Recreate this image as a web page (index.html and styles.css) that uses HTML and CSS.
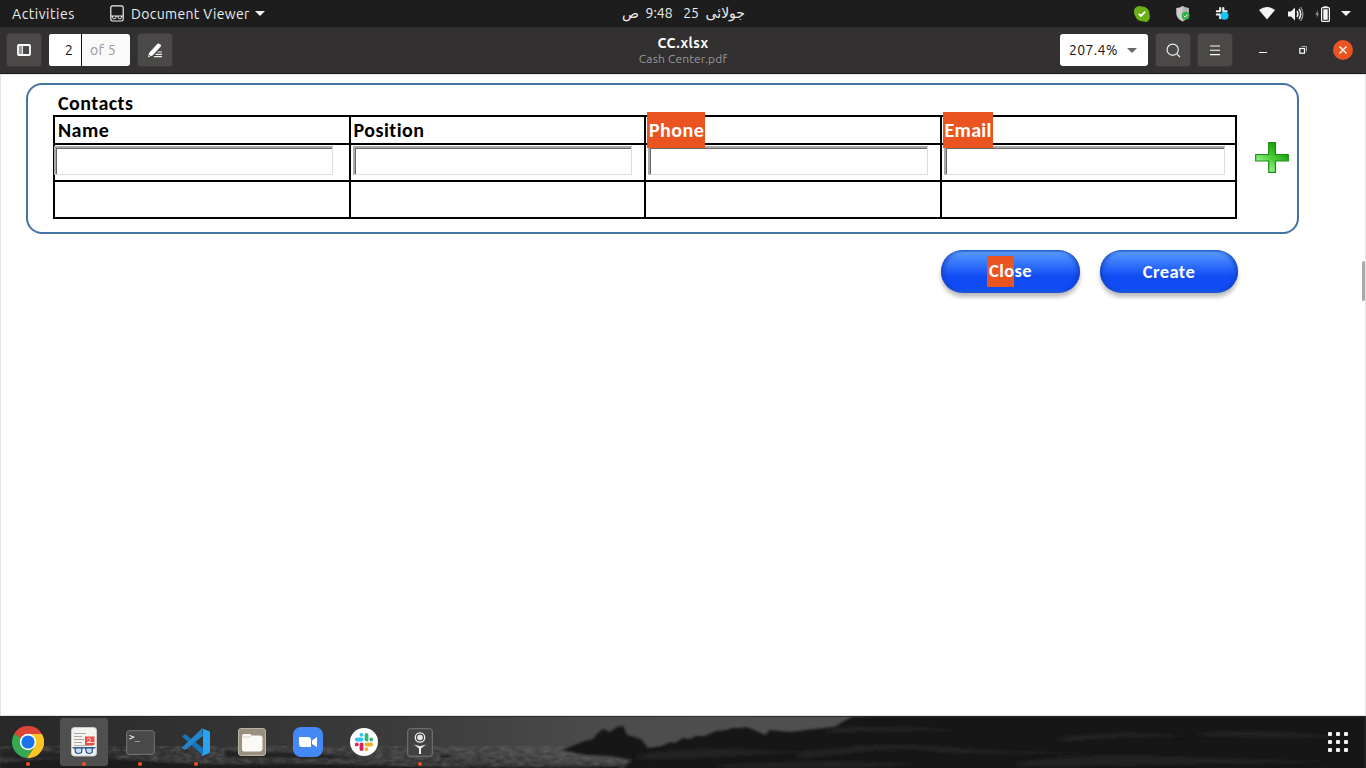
FILE: index.html
```html
<!DOCTYPE html>
<html lang="en">
<head>
<meta charset="utf-8">
<title>Document Viewer</title>
<link rel="stylesheet" href="styles.css">
</head>
<body>
<div class="topbar">
  <span class="activities">Activities</span>
  <div class="app-menu">
    <svg width="14" height="17" viewBox="0 0 14 17" fill="none" stroke="#f2f2f2"><rect x=".8" y=".8" width="12.4" height="15.2" rx="1.8" stroke-width="1.2"/><path d="M1 11H13M2.500 11V12.500Q2.500 13.800 4.200 13.800T6 12.200V11M11.500 11V12.500Q11.500 13.800 9.800 13.800T8 12.200V11" stroke-width="1"/></svg>
    <span class="app-name">Document Viewer</span>
    <span class="caret"></span>
  </div>
  <div class="clock" dir="rtl"><span class="month">جولائی</span><span class="day">25</span><span class="time">9:48</span><span class="ampm">ص</span></div>
  <div class="tray">
    <svg class="t-skype" width="16" height="16" viewBox="0 0 16 16"><path d="M5 0Q7 .3 8 .5A7.500 7.500 0 0 1 15.500 8.500Q16.500 12 14.500 14.500T10 15.500Q3 16 .7 9Q-.7 5 .7 2.500T5 0Z" fill="#6aaf14"/><path d="M4.800 7.800 7 10l4.300-4.300" stroke="#fff" stroke-width="1.900" fill="none"/></svg>
    <svg class="t-shield" width="15" height="16" viewBox="0 0 15 16"><path d="M6.500 0Q9 2 12.700 2V8Q12 13 6.500 15.500Q.9 13 .3 8V2Q4 2 6.500 0Z" fill="#cfcfcf"/><path d="M6.500 0V15.500Q12 13 12.700 8V2Q9 2 6.500 0" fill="#b5b5b5"/><circle cx="9.600" cy="9.700" r="3.900" fill="#2fb344"/><path d="m7.700 9.700 1.500 1.500 2.500-2.700" stroke="#fff" fill="none"/></svg>
    <svg class="t-slack" width="15" height="15" viewBox="0 0 15 15"><g stroke="#f4f4f4" stroke-width="2.100" stroke-linecap="round"><path d="M5.200 2V4.800M8.300 2V5.200M1.800 5.200H4.800M8.600 5.200H11.600M1.800 8.500H4.800M5.200 9.200V12.300"/></g><circle cx="9.500" cy="9.800" r="4" fill="#10c6f4"/></svg>
    <svg class="t-wifi" width="16" height="13" viewBox="0 0 16 13"><path d="M0 3Q8-3 16 3L8 12.500Z" fill="#f5f5f5"/></svg>
    <svg class="t-vol" width="17" height="16" viewBox="0 0 17 16"><path d="M0 5.500H3L7 1.500V14.500L3 10.500H0Z" fill="#f5f5f5"/><path d="M9 5Q11 8 9 11M11 3Q14.500 8 11 13" fill="none" stroke="#f5f5f5" stroke-width="1.500"/><path d="M12.500 1Q17.500 8 12.500 15" fill="none" stroke="#999" stroke-width="1.200"/></svg>
    <svg class="t-bat" width="15" height="16" viewBox="0 0 15 16"><path d="M3 4 .3 8.800H2L1.600 12 4 7.500H2.500Z" fill="#999"/><rect x="6.600" y="1.600" width="7.800" height="13.800" rx="1" fill="none" stroke="#f5f5f5" stroke-width="1.200"/><path d="M8.500.3h4v1.500h-4zM8.300 3.300h4.400v10.400H8.300z" fill="#f5f5f5"/></svg>
    <span class="caret"></span>
  </div>
</div>

<div class="header">
  <button class="hbtn"><svg width="14" height="12" viewBox="0 0 14 12"><rect x="1" y="1" width="12" height="10" rx=".8" fill="none" stroke="#fff" stroke-width="1.800"/><path d="M2 2H4.500V10H2Z" fill="#999"/><path d="M5.300 2V10" stroke="#fff" stroke-width="1.200"/></svg></button>
  <div class="pages"><span class="cur">2</span><span class="total">of 5</span></div>
  <button class="hbtn"><svg width="14" height="15" viewBox="0 0 14 15"><path d="M0 14.300 1 10 9.500.8Q10.500 0 12 1.200T12.800 3.500L4.500 12.500Z" fill="#fff"/><path d="M.9 12 2.600 13.200" stroke="#4a4947" stroke-width=".8"/><path d="M9.500 9H14M7.500 11.300H14M6 13.700H14" stroke="#eee" stroke-width="1.200"/></svg></button>
  <div class="title"><b>CC.xlsx</b><span>Cash Center.pdf</span></div>
  <div class="right">
    <div class="zoom"><span class="zoom-val">207.4%</span><span class="caret dark"></span></div>
    <button class="hbtn"><svg width="15" height="15" viewBox="0 0 15 15" fill="none" stroke="#eee" stroke-width="1.200"><circle cx="6.700" cy="6.700" r="5.600"/><path d="m10.800 10.800 3.200 3.200"/></svg></button>
    <button class="hbtn"><svg width="12" height="11" viewBox="0 0 12 11"><path d="M1 1H11M1 5.300H11M1 9.600H11" stroke="#fff" stroke-width="1.100"/></svg></button>
    <svg class="min" width="8" height="8" viewBox="0 0 8 8"><path d="M0 6.500H8" stroke="#fff"/></svg>
    <svg class="max" width="8" height="8" viewBox="0 0 8 8" fill="none"><path d="M2.500.5H7.500V5.500" stroke="#aaa"/><rect x=".8" y="2.500" width="4.700" height="4.700" stroke="#fff" stroke-width="1.200"/></svg>
    <svg class="close" width="20" height="20" viewBox="0 0 20 20"><circle cx="10" cy="10" r="10" fill="#e95420"/><path d="m6.500 6.500 7 7M13.500 6.500l-7 7" stroke="#fff" stroke-width="1.400"/></svg>
  </div>
</div>

<main class="doc">
  <section class="frame">
    <div class="contacts">
      <h1>Contacts</h1>
      <div class="table">
        <div class="cell head"><span>Name</span></div>
        <div class="cell head"><span>Position</span></div>
        <div class="cell head"><mark class="m-phone">Phone</mark></div>
        <div class="cell head"><mark class="m-email">Email</mark></div>
        <div class="cell"><div class="field f1"></div></div>
        <div class="cell"><div class="field f2"></div></div>
        <div class="cell"><div class="field f3"></div></div>
        <div class="cell"><div class="field f4"></div></div>
        <div class="cell"></div><div class="cell"></div><div class="cell"></div><div class="cell"></div>
      </div>
    </div>
    <svg class="plus" width="34" height="31" viewBox="0 0 34 31"><defs><linearGradient id="pg" x1="0" y1="1" x2=".9" y2="0"><stop offset=".12" stop-color="#b4ffb0"/><stop offset=".5" stop-color="#4fcf3c"/><stop offset=".85" stop-color="#159a08"/></linearGradient></defs><path d="M13.700.7H20.500V12.500H33.300V19H20.500V30.300H13.700V19H.7V12.500H13.700Z" fill="url(#pg)" stroke="#1e8c14" stroke-width="1.200"/></svg>
  </section>
  <div class="actions">
    <button class="pill"><span class="close-label"><mark>Clo</mark>se</span></button>
    <button class="pill"><span>Create</span></button>
  </div>
  <div class="scroll"></div>
</main>

<footer class="dock">
  <svg class="scene" width="1366" height="52" viewBox="0 0 1366 52" preserveAspectRatio="none">
    <defs>
      <linearGradient id="sky" x1="0" x2="1" y1="0" y2="0"><stop offset="0" stop-color="#282828"/><stop offset=".3" stop-color="#3c3c3c"/><stop offset=".45" stop-color="#4c4c4c"/><stop offset=".6" stop-color="#505050"/></linearGradient>
      <filter id="soft"><feGaussianBlur stdDeviation="1"/></filter>
      <filter id="haze" x="-.1" y="-1" width="1.200" height="3"><feGaussianBlur stdDeviation="4"/></filter>
      <filter id="grain" x="0" y="0" width="1" height="1" color-interpolation-filters="sRGB"><feTurbulence type="fractalNoise" baseFrequency=".12 .25" numOctaves="3" seed="4"/><feColorMatrix values="0 0 0 0 .45  0 0 0 0 .45  0 0 0 0 .45  1.600 0 0 0 -.5"/></filter>
      <filter id="folds" x="-.1" y="-1" width="1.200" height="3"><feGaussianBlur stdDeviation="5 1.500"/></filter>
    </defs>
    <rect width="1366" height="52" fill="url(#sky)"/>
    <path d="M-20 42H480L560 46H650V60H-20Z" fill="#303030" filter="url(#haze)"/>
    <rect y="30" width="640" height="22" filter="url(#grain)" opacity=".55"/>
    <path d="M0 47Q70 39 130 44T250 48T400 50T620 50V54H0Z" fill="#1b1b1b" filter="url(#soft)"/>
    <path d="M0 35Q90 37 115 40T0 42ZM225 35Q300 36 345 40T225 41ZM440 39Q450 38 455 41L440 42Z" fill="#242424" filter="url(#soft)"/>
    <path d="M562 34 572 30 585 25 593 23 597 18 603 13 610 16 617 11 623 10 627 19 634 21 641 23 648 32 662 30 670 26 675 27 683 22 690 23 696 20 705 20 716 15 727 14 732 12 741 12 746 11 754 14 765 19 770 14 790 16 815 13 835 11 844 5 852 1 870 0H1366V60H615L632 44 610 40 585 39Z" fill="#191919" filter="url(#soft)"/>
    <g filter="url(#folds)" fill="#222">
      <path d="M640 38Q700 30 760 34T860 29Q780 40 640 44ZM830 12Q900 8 960 15Q890 14 830 17ZM800 36Q880 24 950 31T1120 36Q960 40 930 35T800 43ZM1060 21Q1130 13 1190 21Q1120 20 1060 26ZM1020 46Q1080 38 1150 40T1330 46Q1180 48 1020 51ZM1200 17Q1260 12 1340 21Q1280 22 1200 20ZM720 49Q820 43 920 48L860 52H720Z"/>
    </g>
    <path d="M0 .5H1366" stroke="#222" opacity=".7"/>
  </svg>
  <div class="apps">
    <div class="app on"><svg width="32" height="32" viewBox="0 0 32 32"><path d="M2.100 8A16 16 0 0 1 29.900 8H16L9 20Z" fill="#dd4436"/><path d="M2.100 8A16 16 0 0 0 15 32L23 20 16 16Z" fill="#36a852"/><path d="M29.900 8A16 16 0 0 1 15 32L23 20V8Z" fill="#fcc524"/><path d="M16 8H24V20H16Z" fill="#fcc524"/><circle cx="16" cy="16" r="8.200" fill="#fff"/><circle cx="16" cy="16" r="6.600" fill="#1a73e8"/></svg></div>
    <div class="app on active"><svg width="26" height="30" viewBox="0 0 26 30"><rect x=".5" y=".5" width="25" height="28.500" rx="3" fill="#f3f3f2" stroke="#ccc"/><path d="M3 6.500H15M3 9.500H11M3 12.500H13M3 15.500H11M3 18.500H22" stroke="#b3a999" stroke-width="1"/><rect x="14" y="9.500" width="9.500" height="8.500" fill="#f04d43"/><path d="M16 12.500Q19 10 19.500 12.500T16 15.500H23" fill="none" stroke="#fff" stroke-width=".8"/><path d="M1.500 20.800H24.500" stroke="#174176" stroke-width="1.200"/><path d="M4 21H11L10.500 25.500Q7 27.500 4.500 25.500ZM14.500 21H21.500L21 25.500Q18 27.500 15.500 25.500Z" fill="#c5dcf4" stroke="#1d4f8f" stroke-width="1.200"/></svg></div>
    <div class="app on"><svg width="29" height="25" viewBox="0 0 29 25"><rect x=".7" y=".7" width="27.600" height="23.600" rx="2.500" fill="#494949" stroke="#777"/><text x="3" y="10" class="prompt">&gt;_</text></svg></div>
    <div class="app on"><svg width="28" height="28" viewBox="0 0 28 28"><path d="M0 8.500 2 6.700Q3 6 4 6.800L21 20V27.500Z" fill="#1674b9"/><path d="M0 19.500 20 .5 21 8 4 21.300Q3 22 2 21.300L0 19.900Z" fill="#2385ca"/><path d="M20 .5 27 3Q28 3.500 28 5V23Q28 24.500 27 25L20.500 28 19 27Q21 27 21 25V3Q21 1 19 1Z" fill="#2ba2ed"/></svg></div>
    <div class="app"><svg width="28" height="28" viewBox="0 0 28 28"><rect x=".5" y=".5" width="27" height="27" rx="2.500" fill="#999080" stroke="#bbb4a5"/><path d="M4 8Q4 6 6 6H12L14 7.500H22Q24.500 7.500 24.500 10V21Q24 23.500 22 23.500H6Q4 23.500 4 21Z" fill="#faf9f6"/><path d="M4 9H11Q12.500 9 13.500 7.500" fill="none" stroke="#d7d1c3"/></svg></div>
    <div class="app"><svg width="30" height="30" viewBox="0 0 30 30"><rect width="30" height="30" rx="8" fill="#4388f5"/><path d="M6 10H15Q18 10 18 13V20H9Q6 20 6 17ZM19 13.500 24 10V20L19 17Z" fill="#fff"/></svg></div>
    <div class="app"><svg width="28" height="28" viewBox="0 0 28 28"><circle cx="14" cy="14" r="14" fill="#fff"/><g stroke-width="3.800" stroke-linecap="round"><path d="M6.800 11.500H11.500M11.500 6.800V6.810" stroke="#36c5f0"/><path d="M16.500 6.800V11.500M21.200 11.500H21.210" stroke="#2eb67d"/><path d="M16.500 16.500H21.200M16.500 21.200V21.210" stroke="#ecb22e"/><path d="M11.500 16.500V21.200M6.800 16.500H6.810" stroke="#e01e5a"/></g></svg></div>
    <div class="app on"><svg width="26" height="29" viewBox="0 0 26 29"><rect x=".7" y=".7" width="24.600" height="27.600" rx="2.500" fill="#434343" stroke="#777"/><circle cx="13" cy="9.500" r="4.700" fill="none" stroke="#eee" stroke-width="1.300"/><circle cx="13" cy="9.500" r="2.800" fill="#e8e8e8"/><path d="M7 16.500 12 20.500V26H14V20.500L19 16.500 13 18.300Z" fill="#eee"/></svg></div>
  </div>
  <div class="grid-icon"><i></i><i></i><i></i><i></i><i></i><i></i><i></i><i></i><i></i></div>
</footer>
</body>
</html>
```
FILE: styles.css
```css
* { box-sizing: border-box; }
body {
  margin: 0; width: 1366px; height: 768px; overflow: hidden;
  display: flex; flex-direction: column;
  font-family: Ubuntu, "Noto Sans", sans-serif; background: #fff;
}
svg { display: block; flex: none; }
button { padding: 0; border: 0; font: inherit; }

.topbar {
  height: 27px; background: #1d1d1d; color: #eee; font-size: 14px;
  display: grid; grid-template-columns: 110px 1fr auto 1fr; align-items: center;
  position: relative; white-space: nowrap;
}
.activities { padding-left: 12px; letter-spacing: .55px; }
.app-menu { display: flex; align-items: center; }
.app-name { margin: 0 5px 0 7px; letter-spacing: .35px; }
.caret { border: 5px solid transparent; border-top-color: #f2f2f2; border-bottom: 0; }
.clock { position: absolute; left: 622px; width: 123px; display: flex; justify-content: space-between; line-height: 27px; }
.month, .ampm { font-family: "DejaVu Sans", sans-serif; }
.day { margin-left: 4px; }
.tray { grid-column: 4; justify-self: end; display: flex; align-items: center; padding-right: 15px; }
.t-skype { margin-right: 26px; }
.t-shield { margin-right: 24px; }
.t-slack { margin-right: 29px; }
.t-wifi { margin-right: 13px; }
.t-vol { margin-right: 10px; }
.t-bat { margin-right: 11px; }

.header {
  height: 47px; background: #323031; border-bottom: 1px solid #1c1c1c;
  display: flex; align-items: center; padding: 0 13px 0 7px; position: relative;
}
.hbtn {
  width: 34px; height: 32px; border-radius: 3px; background: #4a4947; box-shadow: 0 0 0 1px #3b3a39;
  display: flex; align-items: center; justify-content: center; flex: none;
}
.pages {
  margin: 0 8px; width: 81px; height: 32px; border-radius: 3px; overflow: hidden;
  display: flex; font-size: 14px; line-height: 32px; background: #fafafa;
}
.cur { width: 33px; padding-left: 16px; background: #fff; border-right: 1px solid #111; color: #111; }
.total { padding-left: 8px; color: #999; letter-spacing: .3px; }
.title { position: absolute; left: 0; width: 1366px; top: 7px; display: flex; flex-direction: column; align-items: center; pointer-events: none; }
.title b { font-size: 14px; line-height: 18px; color: #fff; letter-spacing: .5px; }
.title span { font-size: 12px; line-height: 14px; color: #999; letter-spacing: .15px; }
.right { margin-left: auto; display: flex; align-items: center; }
.zoom {
  width: 88px; height: 32px; margin-right: 8px; border-radius: 3px; background: #fff; color: #111;
  display: flex; align-items: center; justify-content: space-between; padding: 0 11px 0 9px; font-size: 14px; letter-spacing: .35px;
}
.dark { border-top-color: #666; }
.right .hbtn + .hbtn { margin-left: 8px; }
.min { margin: 0 32px 0 27px; }
.max { margin-right: 26px; }

.doc {
  height: 642px; position: relative; background: #fff;
  border: 1px solid #e3e3e3; padding: 8px 65px 0 25px;
  font-family: Carlito, Lato, sans-serif; font-weight: 700;
}
.frame {
  height: 151px; width: 1273px; border: 2px solid #4474a4; border-radius: 16px;
  display: flex; padding: 6px 0 0 25px;
}
.contacts { width: 1184px; flex: none; }
h1 { margin: 0; height: 24px; padding-left: 5px; font-size: 20px; line-height: 24px; letter-spacing: .45px; }
.table {
  background: #000; display: grid; grid-template-columns: repeat(4, 1fr);
  grid-template-rows: 26px 35px 35px; gap: 2px; padding: 2px;
}
.cell { background: #fff; }
.head { display: flex; align-items: center; padding-left: 3px; font-size: 20px; line-height: 24px; letter-spacing: .45px; white-space: nowrap; }
mark { background: #e95420; color: #fff; }
.head mark { height: 36px; line-height: 36px; flex: none; position: relative; z-index: 2; margin-left: -2px; padding-left: 2px; }
.m-phone { width: 58px; }
.head .m-email { width: 50px; letter-spacing: .3px; }
.field {
  height: 29px; margin-top: 1px; width: 279px; background: #fff; position: relative;
  border: 1px solid #ddd; border-top: 2px solid #aaa; border-left: 2px solid #aaa;
  box-shadow: inset 1px 1px #666;
}
.f1 { margin-left: -1px; }
.f2 { margin-left: 2px; }
.f3 { margin-left: 2px; width: 280px; }
.f4 { margin-left: 2px; width: 281px; }
.plus { margin: 51px 0 0 18px; }
.actions { display: flex; gap: 20px; margin: 16px 0 0 915px; }
.pill {
  width: 139px; height: 43px; border-radius: 22px; color: #fff; font-size: 18.500px; font-weight: 700; letter-spacing: .4px; line-height: 30px;
  background: linear-gradient(#2c62d2 0, #5799fa 6%, #4284fb 20%, #2362fa 46%, #114bf4 62%, #114bf4 90%, #2362df 100%);
  box-shadow: inset 4px 0 5px -2px #1540bd, inset -4px 0 5px -2px #1540bd, 0 4px 4px #bbb;
}
.pill + .pill { width: 138px; }
.close-label { display: flex; justify-content: center; }
.pill mark { height: 31px; padding-left: 2px; margin-left: -2px; }
.scroll { position: absolute; right: 0; top: 186px; width: 3px; height: 40px; border-radius: 2px; background: #aaa; }

.dock { height: 52px; position: relative; background: #222; display: flex; justify-content: space-between; align-items: center; overflow: hidden; }
.scene { position: absolute; inset: 0; }
.apps { display: flex; gap: 8px; padding-left: 4px; position: relative; }
.app { width: 48px; height: 48px; border-radius: 3px; display: flex; align-items: center; justify-content: center; position: relative; }
.active { background: #505050; }
.on::after { content: ""; position: absolute; width: 4px; height: 4px; border-radius: 50%; background: #e95420; bottom: 0; left: 22px; }
.prompt { font: 9px "DejaVu Sans Mono", monospace; fill: #fff; }
.grid-icon { position: relative; display: grid; grid-template-columns: repeat(3, 4px); gap: 4px; margin-right: 18px; }
.grid-icon i { width: 4px; height: 4px; border-radius: 1px; background: #f2f2f2; }
```
